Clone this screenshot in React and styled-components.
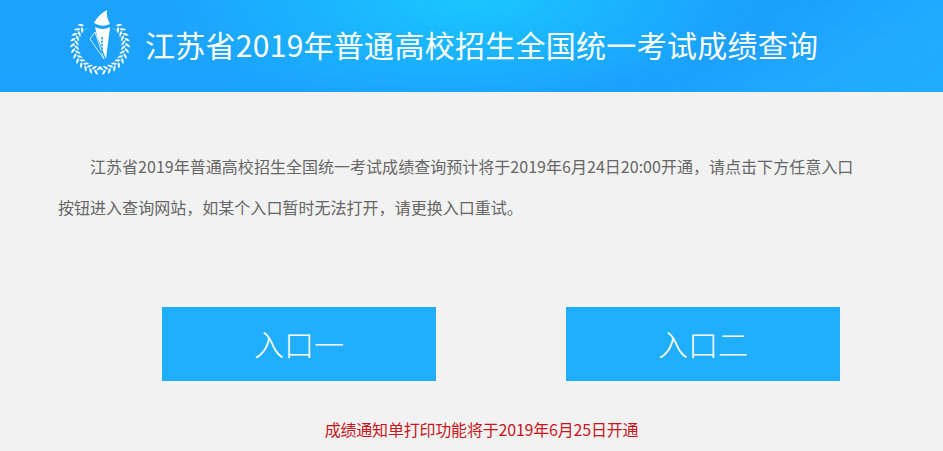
import React from 'react';
import styled, { createGlobalStyle } from 'styled-components';

const Global = createGlobalStyle`
  html, body { margin: 0; padding: 0; background: #f2f2f2; }
  body { font-family: "Microsoft YaHei", "Noto Sans CJK SC", "Liberation Sans", sans-serif; overflow: hidden; }
`;
const Page = styled.div`
  width: 943px; height: 451px; overflow: hidden; background: #f2f2f2;
  display: flex; flex-direction: column;
`;
const Header = styled.header`
  height: 92px; flex: none; display: flex; align-items: center; padding-left: 65px; gap: 10px;
  background:
    radial-gradient(300px 110px at 470px 0px, rgba(26,205,255,.85) 0%, rgba(26,190,255,.5) 60%, rgba(26,180,255,0) 100%),
    linear-gradient(155deg, rgba(255,255,255,0) 70%, rgba(38,175,255,.55) 86%, rgba(30,175,255,.85) 100%),
    linear-gradient(90deg, #1ca1fc 0%, #1ba4ff 30%, #1a9dfd 75%, #1ba6ff 100%);
`;
const LogoMark = styled.svg`
  flex: none; width: 70px; height: 72px;
`;
const Title = styled.h1`
  margin: 0; font-size: 30px; font-weight: 400; letter-spacing: .28px; color: #fff; white-space: nowrap; line-height: 1;
  transform: translateY(-2px);
`;
const Content = styled.main`
  padding: 54px 80px 0 58px; flex: 1; display: flex; flex-direction: column;
`;
const Notice = styled.p`
  margin: 0; font-size: 16px; line-height: 41px; color: #666; text-indent: 32px; letter-spacing: .03px;
`;
const Entries = styled.div`
  display: flex; justify-content: space-between; margin: 79px 23px 0 104px;
`;
const Entry = styled.a`
  width: 274px; height: 74px; box-sizing: border-box; padding-bottom: 3px; background: #20aeff; color: #fff; font-size: 30px;
  display: flex; align-items: center; justify-content: center; text-decoration: none;
  font-weight: 300;
`;
const PrintNote = styled.p`
  margin: 37px 0 0; font-size: 16px; line-height: 22px; color: #c8161d; text-align: center; padding-left: 42px; letter-spacing: -.2px;
`;

function Leaf({ x, y, rot }) {
  return <path d="M-3.4 0 Q0 -2.2 3.4 0 Q0 2.2 -3.4 0 Z" fill="#fff" transform={`translate(${x} ${y}) rotate(${rot})`} />;
}

function Logo() {
  const cx = 35, cy = 40, leaves = [];
  for (let i = 0; i < 12; i++) {
    const deg = 44 + i * 11.6;
    const a = deg * Math.PI / 180;
    for (const s of [1, -1]) {
      const ox = cx + s * 27.5 * Math.sin(a), oy = cy - 27.5 * Math.cos(a);
      const ix = cx + s * 23.5 * Math.sin(a + 0.1), iy = cy - 23.5 * Math.cos(a + 0.1);
      leaves.push(<Leaf key={`o${i}${s}`} x={ox} y={oy} rot={s * (deg - 50)} />);
      leaves.push(<Leaf key={`i${i}${s}`} x={ix} y={iy} rot={s * (deg - 130)} />);
    }
  }
  return (
    <LogoMark viewBox="0 5 70 72" aria-hidden="true">
      {leaves}
      <path d="M13 48 A21 21 0 0 1 22 23" fill="none" stroke="#8fd6ff" strokeWidth=".7" />
      <path d="M57 48 A21 21 0 0 0 48 23" fill="none" stroke="#8fd6ff" strokeWidth=".7" />
      <path d="M29 18 Q33 10 42 5 Q41 12 45 19 Q37 23 29 18 Z" fill="#fff" />
      <path d="M30 22 Q38 26 45 22 L41 54 L32 31 Z" fill="#fff" />
      <path d="M25 34 L30 27 L39 54 Z" fill="none" stroke="#e4f5ff" strokeWidth=".9" />
      <path d="M37 32 V49" stroke="#1fa0f8" strokeWidth="1.6" strokeDasharray="2.4 1" />
    </LogoMark>
  );
}

export default function App() {
  return (
    <Page>
      <Global />
      <Header>
        <Logo />
        <Title>江苏省2019年普通高校招生全国统一考试成绩查询</Title>
      </Header>
      <Content>
        <Notice>江苏省2019年普通高校招生全国统一考试成绩查询预计将于2019年6月24日20:00开通，请点击下方任意入口按钮进入查询网站，如某个入口暂时无法打开，请更换入口重试。</Notice>
        <Entries>
          <Entry href="#">入口一</Entry>
          <Entry href="#">入口二</Entry>
        </Entries>
        <PrintNote>成绩通知单打印功能将于2019年6月25日开通</PrintNote>
      </Content>
    </Page>
  );
}
